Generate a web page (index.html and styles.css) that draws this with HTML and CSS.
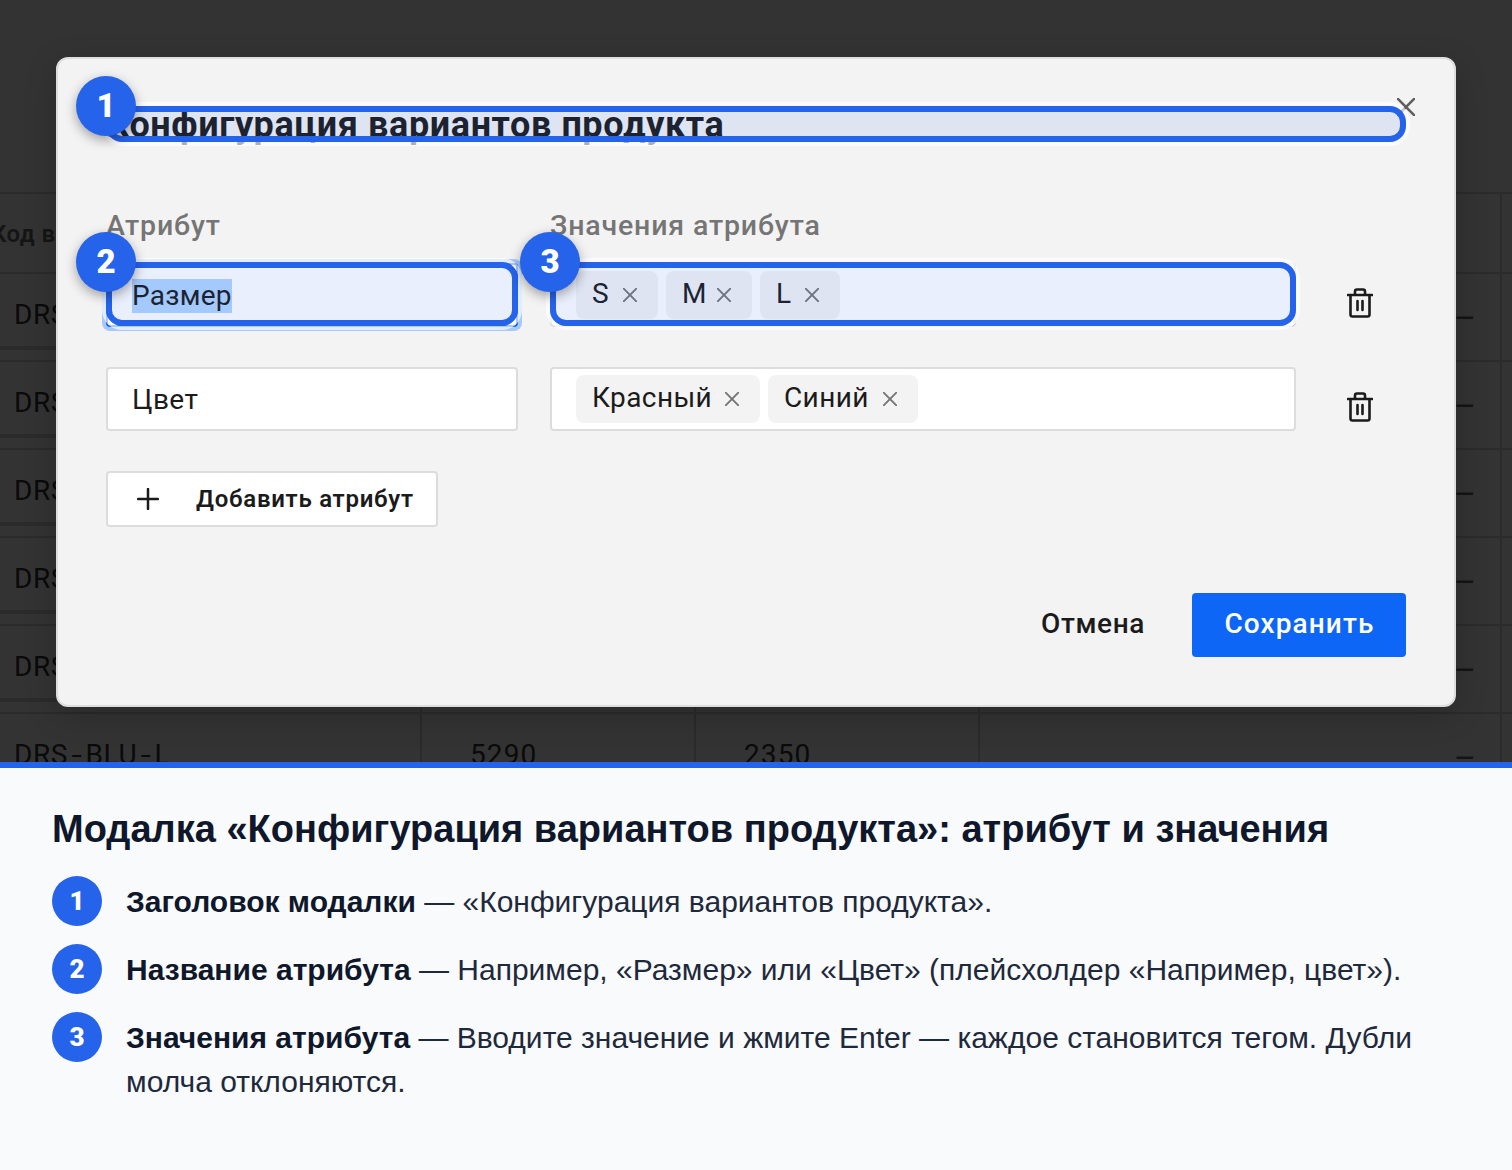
FILE: index.html
```html
<!DOCTYPE html>
<html lang="ru">
<head>
<meta charset="utf-8">
<title>Конфигурация вариантов продукта</title>
<link rel="stylesheet" href="styles.css">
</head>
<body>
<svg class="sprite" aria-hidden="true">
  <symbol id="cross" viewBox="0 0 20 20"><path d="M1 1L19 19M19 1L1 19"/></symbol>
  <symbol id="plus" viewBox="0 0 22 22"><path d="M11 1V21M1 11H21"/></symbol>
  <symbol id="trash" viewBox="0 0 26 30"><path d="M1 7H25M3.500 7V26.500a2 2 0 0 0 2 2H20.500a2 2 0 0 0 2-2V7M8 7V3.500a2 2 0 0 1 2-2H16a2 2 0 0 1 2 2V7M10.500 13V22M15.500 13V22"/></symbol>
</svg>
<main class="scene">
  <section class="table">
    <div class="row head"><div class="cell">Код варианта</div><div class="cell"></div><div class="cell"></div><div class="cell"></div></div>
    <div class="row"><div class="cell"><span>DRS<i>-</i>RED<i>-</i>S</span></div><div class="cell">5290</div><div class="cell">2350</div><div class="cell end">–</div></div>
    <div class="row"><div class="cell"><span>DRS<i>-</i>RED<i>-</i>M</span></div><div class="cell">5290</div><div class="cell">2350</div><div class="cell end">–</div></div>
    <div class="row"><div class="cell"><span>DRS<i>-</i>RED<i>-</i>L</span></div><div class="cell">5290</div><div class="cell">2350</div><div class="cell end">–</div></div>
    <div class="row"><div class="cell"><span>DRS<i>-</i>BLU<i>-</i>S</span></div><div class="cell">5290</div><div class="cell">2350</div><div class="cell end">–</div></div>
    <div class="row"><div class="cell"><span>DRS<i>-</i>BLU<i>-</i>M</span></div><div class="cell">5290</div><div class="cell">2350</div><div class="cell end">–</div></div>
    <div class="row"><div class="cell"><span>DRS<i>-</i>BLU<i>-</i>L</span></div><div class="cell">5290</div><div class="cell">2350</div><div class="cell end">–</div></div>
  </section>

  <section class="modal">
    <header class="modal-head">
      <h1>Конфигурация вариантов продукта</h1>
      <svg class="close"><use href="#cross"/></svg>
      <div class="mark"><b class="badge">1</b></div>
    </header>
    <div class="grid">
      <div class="label">Атрибут</div>
      <div class="label">Значения атрибута</div>
      <div></div>

      <div class="field focused"><span class="selected">Размер</span><div class="mark"><b class="badge">2</b></div></div>
      <div class="field tags">
        <span class="tag t-s">S<svg><use href="#cross"/></svg></span>
        <span class="tag t-m">M<svg><use href="#cross"/></svg></span>
        <span class="tag t-l">L<svg><use href="#cross"/></svg></span>
        <div class="mark"><b class="badge">3</b></div>
      </div>
      <svg class="trash"><use href="#trash"/></svg>

      <div class="field"><span>Цвет</span></div>
      <div class="field tags">
        <span class="tag t-red">Красный<svg><use href="#cross"/></svg></span>
        <span class="tag t-blue">Синий<svg><use href="#cross"/></svg></span>
      </div>
      <svg class="trash"><use href="#trash"/></svg>
    </div>
    <div class="add"><svg><use href="#plus"/></svg><span>Добавить атрибут</span></div>
    <footer class="actions"><span class="cancel">Отмена</span><span class="save">Сохранить</span></footer>
  </section>
</main>

<section class="legend">
  <h2>Модалка «Конфигурация вариантов продукта»: атрибут и значения</h2>
  <div class="item"><b class="num">1</b><p><strong>Заголовок модалки</strong> — «Конфигурация вариантов продукта».</p></div>
  <div class="item"><b class="num">2</b><p><strong>Название атрибута</strong> — Например, «Размер» или «Цвет» (плейсхолдер «Например, цвет»).</p></div>
  <div class="item"><b class="num">3</b><p><strong>Значения атрибута</strong> — Вводите значение и жмите Enter — каждое становится тегом. Дубли молча отклоняются.</p></div>
</section>
</body>
</html>
```
FILE: styles.css
```css
* { box-sizing: border-box; }
body { margin: 0; width: 1512px; height: 1170px; overflow: hidden; background: #f9fafc; font-family: Roboto, sans-serif; }
.sprite { position: absolute; width: 0; height: 0; }
svg { fill: none; stroke: #1b1b1b; stroke-linecap: round; stroke-linejoin: round; flex: none; }

.scene { position: relative; height: 762px; overflow: hidden; background: #333; }

/* dimmed table under the modal */
.table { padding-top: 192px; font-size: 28px; letter-spacing: 1.1px; color: #0a0a0a; }
.row { display: grid; grid-template-columns: 422px 274px 284px 522px 1fr; height: 88px; border-top: 2px solid #2b2b2b; }
.cell { border-right: 2px solid #2b2b2b; padding: 24px 0 0 48px; line-height: 33px; }
.cell:first-child { display: flex; flex-direction: column; justify-content: space-between; padding: 24px 0 10px 14px; }
.cell:first-child span { letter-spacing: .6px; }
.cell i { display: inline-block; margin: 0 4px 0 5px; font-style: normal; transform: scaleX(1.35); }
.row:not(.head) .cell:first-child::after { content: ""; height: 4px; margin-left: -14px; background: #2b2b2b; }
.cell.end { padding: 28px 24px 0 0; text-align: right; font-size: 34px; letter-spacing: 0; color: #141414; }
.head { height: 80px; font-size: 24px; font-weight: 600; letter-spacing: .4px; color: #151515; }
.head .cell:first-child { padding-left: 0; text-indent: -9px; }

.modal { position: absolute; left: 56px; top: 57px; width: 1400px; height: 650px; padding: 47px 48px 48px; background: #f3f3f3; border: 2px solid #ddd; border-radius: 12px; box-shadow: 0 8px 32px rgba(0,0,0,.2); color: #1b1b1b; font-size: 28px; }
.modal-head { position: relative; display: flex; justify-content: space-between; height: 36px; }
h1 { margin: 0; font-size: 36px; line-height: 38px; font-weight: 700; letter-spacing: .6px; white-space: nowrap; color: #1b1b1b; }
.close { width: 18px; height: 18px; margin: -8px -9px 0 0; stroke: #5e5e5e; stroke-width: 2.8; overflow: visible; }

/* annotation frame with its number */
.mark { position: absolute; inset: 0; border: 6px solid #2563eb; border-radius: 16px; background: rgba(37,99,235,.1); box-shadow: 0 0 0 4px rgba(255,255,255,.65); letter-spacing: 0; }
.badge { position: absolute; left: -36px; top: -36px; width: 60px; height: 60px; border-radius: 50%; background: #2563eb; color: #fff; font: 900 33px/59px Roboto, sans-serif; text-align: center; box-shadow: 0 4px 12px rgba(0,0,0,.35); }

.grid { display: grid; grid-template-columns: 412px 746px 1fr; column-gap: 32px; row-gap: 40px; margin-top: 65px; }
.label { height: 16px; line-height: 37px; color: #757575; font-size: 28.5px; font-weight: 500; letter-spacing: .85px; white-space: nowrap; }
.field { position: relative; display: flex; align-items: center; height: 64px; padding: 0 24px; background: #fff; border: 2px solid #dcdcdc; border-radius: 4px; letter-spacing: .4px; }
.field .mark { inset: -3px -2px -1px; }
.focused { border-color: #0d66f5; box-shadow: 0 0 0 4px #a9c8f8; }
.selected { margin-top: 2px; background: #b3d5ff; line-height: 34px; letter-spacing: .25px; }
.tags { gap: 8px; }
.tag { display: flex; align-items: center; justify-content: space-between; height: 48px; padding: 0 21px 4px 16px; border-radius: 8px; background: #f3f3f3; }
.tag svg { width: 14px; height: 14px; margin-top: 4px; stroke: #757575; stroke-width: 2.7; }
.t-s { width: 82px; } .t-m { width: 86px; } .t-l { width: 80px; } .t-red { width: 184px; } .t-blue { width: 150px; }
.trash { width: 26px; height: 30px; margin: 25px 0 0 19px; stroke-width: 2.6; }
.add { display: flex; align-items: center; width: 332px; height: 56px; margin-top: 40px; padding-left: 29px; background: #fff; border: 2px solid #dcdcdc; border-radius: 4px; font-size: 24px; font-weight: 600; letter-spacing: .73px; white-space: nowrap; }
.add svg { width: 22px; height: 22px; margin-right: 37px; stroke-width: 2.5; }
.actions { display: flex; justify-content: flex-end; align-items: center; margin-top: 66px; font-weight: 500; letter-spacing: .6px; }
.cancel { margin: -3px 47px 0 0; }
.save { width: 214px; height: 64px; border-radius: 4px; background: #0d66f5; color: #fff; text-align: center; text-indent: 1px; line-height: 61px; letter-spacing: 1.1px; }

.legend { border-top: 6px solid #2563eb; padding: 38px 52px; font-family: "Liberation Sans", sans-serif; color: #1e293b; }
h2 { margin: 0 0 24px; font-size: 38px; line-height: 46px; color: #0f172a; white-space: nowrap; }
.item { display: flex; gap: 24px; margin-bottom: 18px; height: 50px; }
.item p { margin: 4px 0 0; font-size: 30px; line-height: 44px; }
.item strong { color: #0f172a; }
.num { flex: none; width: 50px; height: 50px; border-radius: 50%; background: #2563eb; color: #fff; font: 900 26px/50px Roboto, sans-serif; text-align: center; }
```
